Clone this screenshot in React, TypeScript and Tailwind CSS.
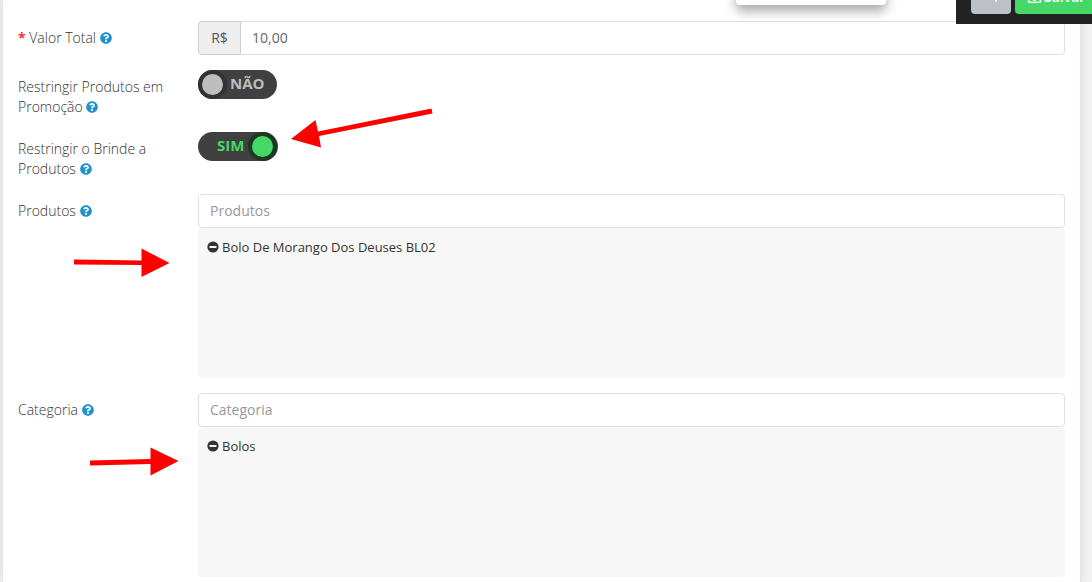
import React from 'react';
import { FaQuestionCircle, FaRegSave, FaReply } from 'react-icons/fa';

const Help: React.FC = () => (
  <FaQuestionCircle size={12} className="inline-block align-[-1px] text-[#1e91cf]" aria-hidden="true" />
);

const Minus: React.FC = () => (
  <svg width="12" height="12" viewBox="0 0 12 12" aria-hidden="true">
    <circle cx="6" cy="6" r="5.600" fill="#333" />
    <rect x="2.500" y="5" width="7" height="2" rx="0.400" fill="#f7f7f7" />
  </svg>
);

type RowProps = {
  id: string;
  label: string;
  required?: boolean;
  children: React.ReactNode;
};

const Row: React.FC<RowProps> = ({ id, label, required, children }) => (
  <div className="flex">
    <label htmlFor={id} className="w-[180px] shrink-0 pt-[7px] pr-6 text-[14px] leading-5 font-light text-[#333]">
      {required && <span className="font-bold text-[#f33]">* </span>}
      {label} <Help />
    </label>
    <div className="min-w-0 flex-1">{children}</div>
  </div>
);

const Toggle: React.FC<{ id: string; on?: boolean }> = ({ id, on }) => (
  <span className="relative inline-flex h-[29px] items-center rounded-full bg-[#404040] align-top">
    <input id={id} type="checkbox" defaultChecked={on} className="absolute inset-0 cursor-pointer opacity-0" />
    {on ? (
      <span className="pointer-events-none flex w-20 items-center justify-between pr-px pl-[19px] text-[15px] font-bold text-[#45d867]">
        <span className="pb-[2px]">SIM</span>
        <span className="size-[29px] rounded-full border-4 border-[#1c3823] bg-[#45d867]" />
      </span>
    ) : (
      <span className="pointer-events-none flex w-[79px] items-center gap-[3px] text-[15px] font-bold text-[#bdbdbd]">
        <span className="size-[29px] rounded-full border-4 border-[#323232] bg-[#bdbdbd]" />
        <span className="pb-[2px]">NÃO</span>
      </span>
    )}
  </span>
);

const Picker: React.FC<{ id: string; placeholder: string; items: string[] }> = ({ id, placeholder, items }) => (
  <>
    <input
      id={id}
      type="text"
      placeholder={placeholder}
      className="block h-[34px] w-full rounded-[4px] border border-[#e0e0e0] bg-white px-[11px] pb-[2px] text-[14px] text-[#666] placeholder:text-[#999]"
    />
    <ul className="h-[150px] overflow-auto rounded-[4px] bg-[#f7f7f7] px-[9px] py-[9px] text-[13px] leading-5 text-[#333]">
      {items.map((item) => (
        <li key={item}>
          <button type="button" aria-label={`Remover ${item}`} className="mr-[3px] cursor-pointer align-[-1px]">
            <Minus />
          </button>
          {item}
        </li>
      ))}
    </ul>
  </>
);

const App: React.FC = () => (
  <div className="relative min-h-screen overflow-hidden bg-[#f1f1f1] pr-[11px] pl-[2px] font-['Open_Sans',sans-serif]">
    <main className="min-h-screen border-x border-[#e3e3f3] bg-white pt-[21px] pr-[15px] pb-[5px] pl-[15px] shadow-[0_0_10px_rgba(0,0,0,0.1)]">
      <form className="flex flex-col gap-[15px]">
        <Row id="total" label="Valor Total" required>
          <div className="flex h-[34px] text-[14px] text-[#666]">
            <span className="flex w-[43px] items-center justify-center rounded-l-[4px] border border-[#ccc] bg-[#eee] pb-[2px] text-[#555]">
              R$
            </span>
            <input
              id="total"
              type="text"
              defaultValue="10,00"
              className="min-w-0 flex-1 rounded-r-[4px] border border-l-0 border-[#e0e0e0] bg-white px-[11px] pb-[2px]"
            />
          </div>
        </Row>
        <Row id="promo" label="Restringir Produtos em Promoção">
          <Toggle id="promo" />
        </Row>
        <Row id="brinde" label="Restringir o Brinde a Produtos">
          <Toggle id="brinde" on />
        </Row>
        <Row id="produtos" label="Produtos">
          <Picker id="produtos" placeholder="Produtos" items={['Bolo De Morango Dos Deuses BL02']} />
        </Row>
        <Row id="categoria" label="Categoria">
          <Picker id="categoria" placeholder="Categoria" items={['Bolos']} />
        </Row>
      </form>
    </main>

    {/* popup and save bar, scrolled mostly out of view */}
    <div className="absolute -top-4 right-[206px] h-[21px] w-[150px] rounded-[4px] bg-white shadow-[0_6px_12px_rgba(0,0,0,0.35)]" />
    <div className="absolute -top-7 right-0 flex h-[52px] w-[136px] gap-1 overflow-hidden bg-[#222] pt-2 pl-[15px] text-[14px] font-semibold text-white">
      <button type="button" aria-label="Voltar" className="flex h-[34px] w-10 shrink-0 items-center justify-center rounded-[4px] bg-[#bbc1c7] pb-[2px]">
        <FaReply size={14} />
      </button>
      <button type="button" className="flex h-[34px] w-[90px] shrink-0 items-center gap-[2px] rounded-[4px] bg-[#45d867] pb-[2px] pl-3">
        <FaRegSave size={15} />
        Salvar
      </button>
    </div>

    {/* pointers drawn over the form */}
    <svg className="pointer-events-none absolute top-0 left-0" width="440" height="480" fill="#f00" aria-hidden="true">
      <path d="M291 139 L315.500 120 L318 131.500 L431.500 108.500 L432.500 113.500 L319 136 L321 147.500 Z" />
      <path d="M74 259.500 L141.500 260.500 V248.500 L169.500 263 L141.500 277 V265 L74 264.500 Z" />
      <path d="M90 460.500 L150.500 459 V447.500 L178.500 461 L150.500 475.500 V464 L90 465.500 Z" />
    </svg>
  </div>
);

export default App;
